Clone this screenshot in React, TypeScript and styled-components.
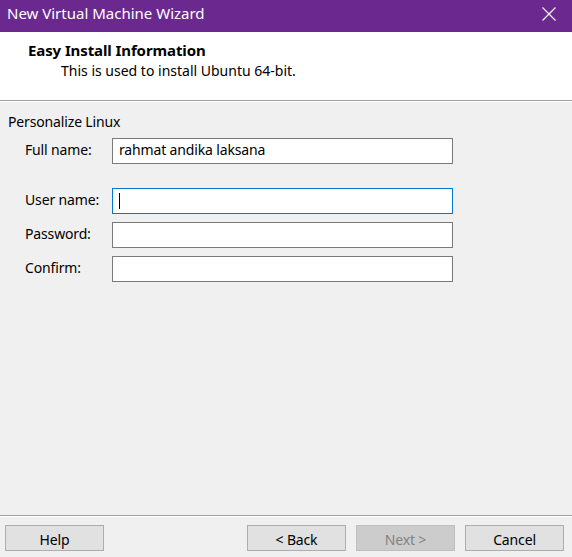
import React from "react";
import styled, { createGlobalStyle } from "styled-components";

const Global = createGlobalStyle`
  html, body { margin: 0; padding: 0; background: #f0f0f0; }
  * { box-sizing: border-box; }
`;

const FONT = `"Noto Sans", "Open Sans", "Liberation Sans", sans-serif`;

const Window = styled.div`
  width: 572px;
  height: 557px;
  display: flex;
  flex-direction: column;
  font-family: ${FONT};
  font-size: 14px;
  letter-spacing: -0.15px;
  color: #000;
  background: #f0f0f0;
  overflow: hidden;
`;

const TitleBar = styled.div`
  height: 32px;
  flex: none;
  background: #6b298f;
  color: #fff;
  display: flex;
  align-items: center;
  justify-content: space-between;
  padding: 0 0 6px 7px;
  font-size: 15px;
  letter-spacing: 0;
`;

const CloseBtn = styled.div`
  width: 46px;
  height: 26px;
  display: flex;
  align-items: center;
  justify-content: center;
  padding-top: 1px;
`;

const Header = styled.div`
  height: 69px;
  flex: none;
  background: #fff;
  border-bottom: 1px solid #a0a0a0;
  padding: 8px 0 0 28px;
  display: flex;
  flex-direction: column;
`;

const HeaderTitle = styled.div`
  font-weight: 700;
  font-size: 15px;
  letter-spacing: -0.1px;
  line-height: 20px;
`;

const HeaderSub = styled.div`
  padding-left: 33px;
  letter-spacing: 0;
  line-height: 22px;
`;

const Body = styled.div`
  flex: 1;
  border-top: 1px solid #fff;
  padding: 10px 0 0 8px;
  display: flex;
  flex-direction: column;
`;

const GroupTitle = styled.div`
  line-height: 20px;
`;

const Form = styled.div`
  display: grid;
  grid-template-columns: 87px 341px;
  padding-left: 17px;
  margin-top: 6px;
  align-items: center;
`;

const Label = styled.div<{ $gap: number }>`
  line-height: 20px;
  margin-top: ${(p) => p.$gap}px;
  padding-bottom: 3px;
`;

const Field = styled.div<{ $focused?: boolean; $gap: number }>`
  height: 26px;
  margin-top: ${(p) => p.$gap}px;
  background: #fff;
  border: 1px solid ${(p) => (p.$focused ? "#0078d7" : "#7a7a7a")};
  display: flex;
  align-items: center;
  padding: 0 0 2px 6px;
  line-height: 20px;
`;

const Caret = styled.span`
  display: inline-block;
  width: 1px;
  height: 16px;
  margin-top: 1px;
  background: #000;
`;

const Spacer = styled.div`
  flex: 1;
`;

const FooterLine = styled.div`
  height: 2px;
  border-top: 1px solid #a0a0a0;
  border-bottom: 1px solid #fff;
  flex: none;
`;

const Footer = styled.div`
  height: 40px;
  flex: none;
  display: flex;
  align-items: flex-start;
  padding: 8px 8px 0 5px;
`;

const Button = styled.div<{ $disabled?: boolean; $ml?: number }>`
  width: 99px;
  height: 26px;
  margin-left: ${(p) => p.$ml ?? 0}px;
  background: ${(p) => (p.$disabled ? "#cccccc" : "#e1e1e1")};
  border: 1px solid ${(p) => (p.$disabled ? "#bfbfbf" : "#adadad")};
  color: ${(p) => (p.$disabled ? "#838383" : "#000")};
  display: flex;
  align-items: center;
  justify-content: center;
  line-height: 20px;
  padding-top: 3px;
`;

const rows = [
  { label: "Full name:", value: "rahmat andika laksana", gap: 0 },
  { label: "User name:", value: "", focused: true, gap: 24 },
  { label: "Password:", value: "", gap: 8 },
  { label: "Confirm:", value: "", gap: 8 },
];

export default function App() {
  return (
    <>
      <Global />
      <Window>
        <TitleBar>
          <span>New Virtual Machine Wizard</span>
          <CloseBtn>
            <svg width="14" height="14" viewBox="0 0 14 14">
              <path d="M0.5 0.5 L13.5 13.5 M13.5 0.5 L0.5 13.5" stroke="#fff" strokeWidth="1.1" />
            </svg>
          </CloseBtn>
        </TitleBar>
        <Header>
          <HeaderTitle>Easy Install Information</HeaderTitle>
          <HeaderSub>This is used to install Ubuntu 64-bit.</HeaderSub>
        </Header>
        <Body>
          <GroupTitle>Personalize Linux</GroupTitle>
          <Form>
            {rows.map((r) => (
              <React.Fragment key={r.label}>
                <Label $gap={r.gap}>{r.label}</Label>
                <Field $focused={r.focused} $gap={r.gap}>
                  {r.focused ? <Caret /> : r.value}
                </Field>
              </React.Fragment>
            ))}
          </Form>
          <Spacer />
        </Body>
        <FooterLine />
        <Footer>
          <Button>Help</Button>
          <Spacer />
          <Button>&lt; Back</Button>
          <Button $disabled $ml={10}>Next &gt;</Button>
          <Button $ml={10}>Cancel</Button>
        </Footer>
      </Window>
    </>
  );
}
